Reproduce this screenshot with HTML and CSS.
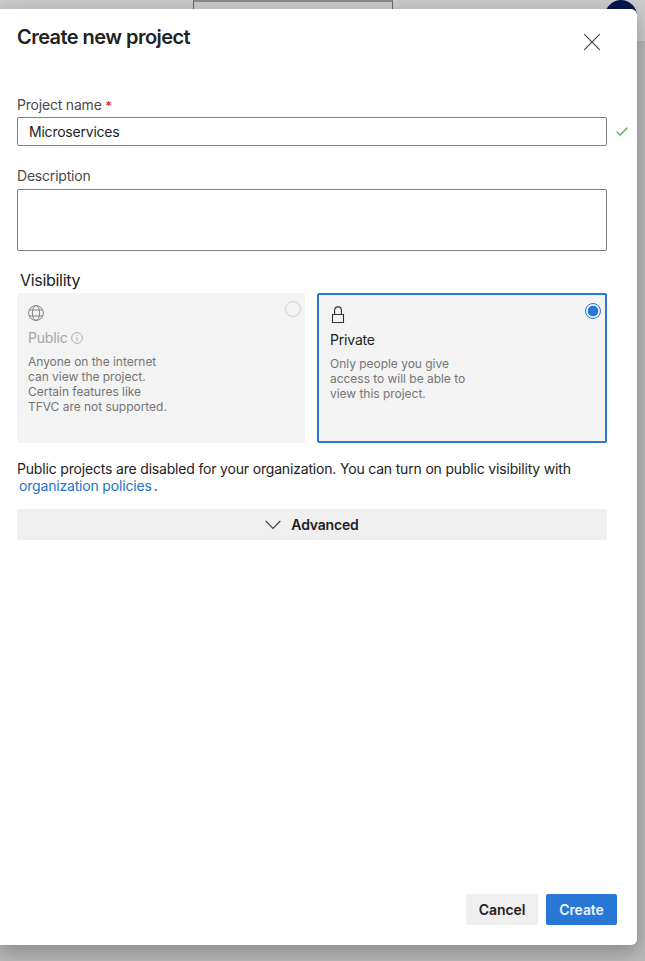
FILE: index.html
```html
<!DOCTYPE html>
<html lang="en">
<head>
<meta charset="utf-8">
<title>Create new project</title>
<link rel="stylesheet" href="styles.css">
</head>
<body>
<div class="backdrop">
  <div class="search"></div>
  <div class="avatar"></div>
</div>
<main class="panel">
  <header class="head">
    <h1 class="title">Create new project</h1>
    <svg class="close" width="18" height="18" viewBox="0 0 18 18" fill="none" stroke="#444" stroke-width="1.2"><path d="M1.2 1.2 16.8 16.8M16.8 1.2 1.2 16.8"/></svg>
  </header>
  <section class="form">
    <label class="label">Project name <span class="req">*</span></label>
    <div class="name-row">
      <div class="input">Microservices</div>
      <svg class="check" width="12" height="9" viewBox="0 0 12 9" fill="none" stroke="#55a854" stroke-width="1.3"><path d="M.6 4.6 4.1 8 11.4.7"/></svg>
    </div>
    <label class="label desc-label">Description</label>
    <div class="textarea"></div>
    <h2 class="group">Visibility</h2>
    <div class="cards">
      <div class="card off">
        <svg class="icon" width="16" height="16" viewBox="0 0 16 16" fill="none" stroke="#858585"><circle cx="8" cy="8" r="7.4"/><ellipse cx="8" cy="8" rx="3.6" ry="7.4"/><path d="M1.3 5h13.4M1.3 11h13.4"/></svg>
        <div class="name">Public <svg class="info" width="12" height="12" viewBox="0 0 12 12" fill="none" stroke="#b0b0b0"><circle cx="6" cy="6" r="5.4"/><path d="M6 5.2V9M6 3v1.1"/></svg></div>
        <p class="text">Anyone on the internet<br>can view the project.<br>Certain features like<br>TFVC are not supported.</p>
        <span class="radio"></span>
      </div>
      <div class="card on">
        <svg class="icon" width="16" height="18" viewBox="0 0 16 18" fill="none" stroke="#333" stroke-width="1.1"><path d="M2.5 8.5h11v8h-11zM4.6 8.5V4.3a3.4 3.4 0 0 1 6.8 0v4.2"/></svg>
        <div class="name">Private</div>
        <p class="text">Only people you give<br>access to will be able to<br>view this project.</p>
        <span class="radio"></span>
      </div>
    </div>
    <p class="note">Public projects are disabled for your organization. You can turn on public visibility with<br><a class="link">organization policies</a>.</p>
    <div class="advanced"><svg width="16" height="10" viewBox="0 0 16 10" fill="none" stroke="#444" stroke-width="1.2"><path d="M.7 1 8 8.3 15.3 1"/></svg><span>Advanced</span></div>
  </section>
  <footer class="foot">
    <button class="btn cancel">Cancel</button>
    <button class="btn create">Create</button>
  </footer>
</main>
</body>
</html>
```
FILE: styles.css
```css
* { box-sizing: border-box; }
body {
  margin: 0;
  height: 961px;
  overflow: hidden;
  position: relative;
  background: #b9b9b9;
  font: 14px/17px Inter, "Liberation Sans", sans-serif;
  letter-spacing: -.18px;
  color: #222;
}
.backdrop {
  position: absolute;
  inset: 0 0 auto;
  height: 42px;
  background: #cbcbcb;
  border-bottom: 1px solid #b2b2b2;
}
.search {
  position: absolute;
  left: 193px;
  top: 0;
  width: 200px;
  height: 30px;
  border: 1px solid #666;
  border-top: 2px solid #8a8a8a;
}
.avatar {
  position: absolute;
  left: 605px;
  top: 0;
  width: 32px;
  height: 32px;
  border-radius: 50%;
  background: #04164d;
}
.panel {
  position: relative;
  display: flex;
  flex-direction: column;
  width: 637px;
  height: 936px;
  margin-top: 9px;
  float: left;
  background: #fff;
  border-radius: 0 6px 6px 0;
  box-shadow: 0 6px 20px rgba(0, 0, 0, .28);
}
.head {
  display: flex;
  justify-content: space-between;
  padding: 15px 36px 0 17px;
  height: 87px;
}
.title {
  margin: 0;
  font-size: 20px;
  line-height: 27px;
  font-weight: 600;
  letter-spacing: -.55px;
}
.close { margin-top: 8.5px; }
.form {
  display: flex;
  flex-direction: column;
  flex: 1;
  padding-left: 17px;
}
.label { color: #4a4a4a; letter-spacing: -.2px; white-space: nowrap; }
.req { color: #d0342c; font-size: 12px; font-weight: 700; }
.name-row {
  display: flex;
  align-items: center;
  gap: 9px;
  margin-top: 3px;
}
.input {
  width: 590px;
  height: 29px;
  padding: 5px 11px;
  border: 1px solid #808080;
  border-radius: 2px;
  letter-spacing: -.22px;
}
.desc-label { margin-top: 21px; }
.textarea {
  width: 590px;
  height: 62px;
  margin-top: 5px;
  border: 1px solid #808080;
  border-radius: 2px;
}
.group {
  margin: 19px 0 0 3px;
  font-size: 16px;
  line-height: 20px;
  font-weight: 400;
  letter-spacing: -.3px;
}
.cards {
  display: grid;
  grid-template-columns: 288px 290px;
  gap: 12px;
  margin-top: 3px;
}
.card {
  position: relative;
  height: 150px;
  padding: 12px 11px;
  background: #f3f3f3;
  border-radius: 2px;
}
.on { border: 2px solid #2b78d4; }
.icon { display: block; }
.name { margin-top: 8px; white-space: nowrap; }
.off .name { color: #a6a6a6; }
.on .icon { margin-top: -1px; }
.on .name { margin-top: 7px; }
.info { vertical-align: -1px; }
.text {
  margin: 8px 0 0;
  font-size: 12px;
  line-height: 15px;
  letter-spacing: -.03px;
  color: #757575;
  white-space: nowrap;
}
.radio {
  position: absolute;
  right: 4px;
  top: 8px;
  width: 16px;
  height: 16px;
  border: 1px solid #cfcfcf;
  border-radius: 50%;
}
.on .radio {
  border: 1.5px solid #2b78d4;
  background: radial-gradient(circle, #2b78d4 5px, #e4efff 5.6px);
}
.note { margin: 17px 0 0; white-space: nowrap; }
.link { color: #2374c8; margin: 0 2px; }
.advanced {
  display: flex;
  align-items: center;
  justify-content: center;
  gap: 10px;
  width: 590px;
  height: 31px;
  margin-top: 15px;
  background: #efefef;
  border-radius: 2px;
  font-weight: 600;
}
.foot {
  display: flex;
  justify-content: flex-end;
  gap: 8px;
  padding: 0 20px 20px 0;
}
.btn {
  height: 31px;
  padding: 0;
  border: 0;
  border-radius: 2px;
  font: inherit;
  font-weight: 600;
  letter-spacing: -.1px;
}
.cancel { width: 72px; background: #efefef; color: #222; }
.create { width: 71px; background: #2977d4; color: #e8f2ff; }
```
